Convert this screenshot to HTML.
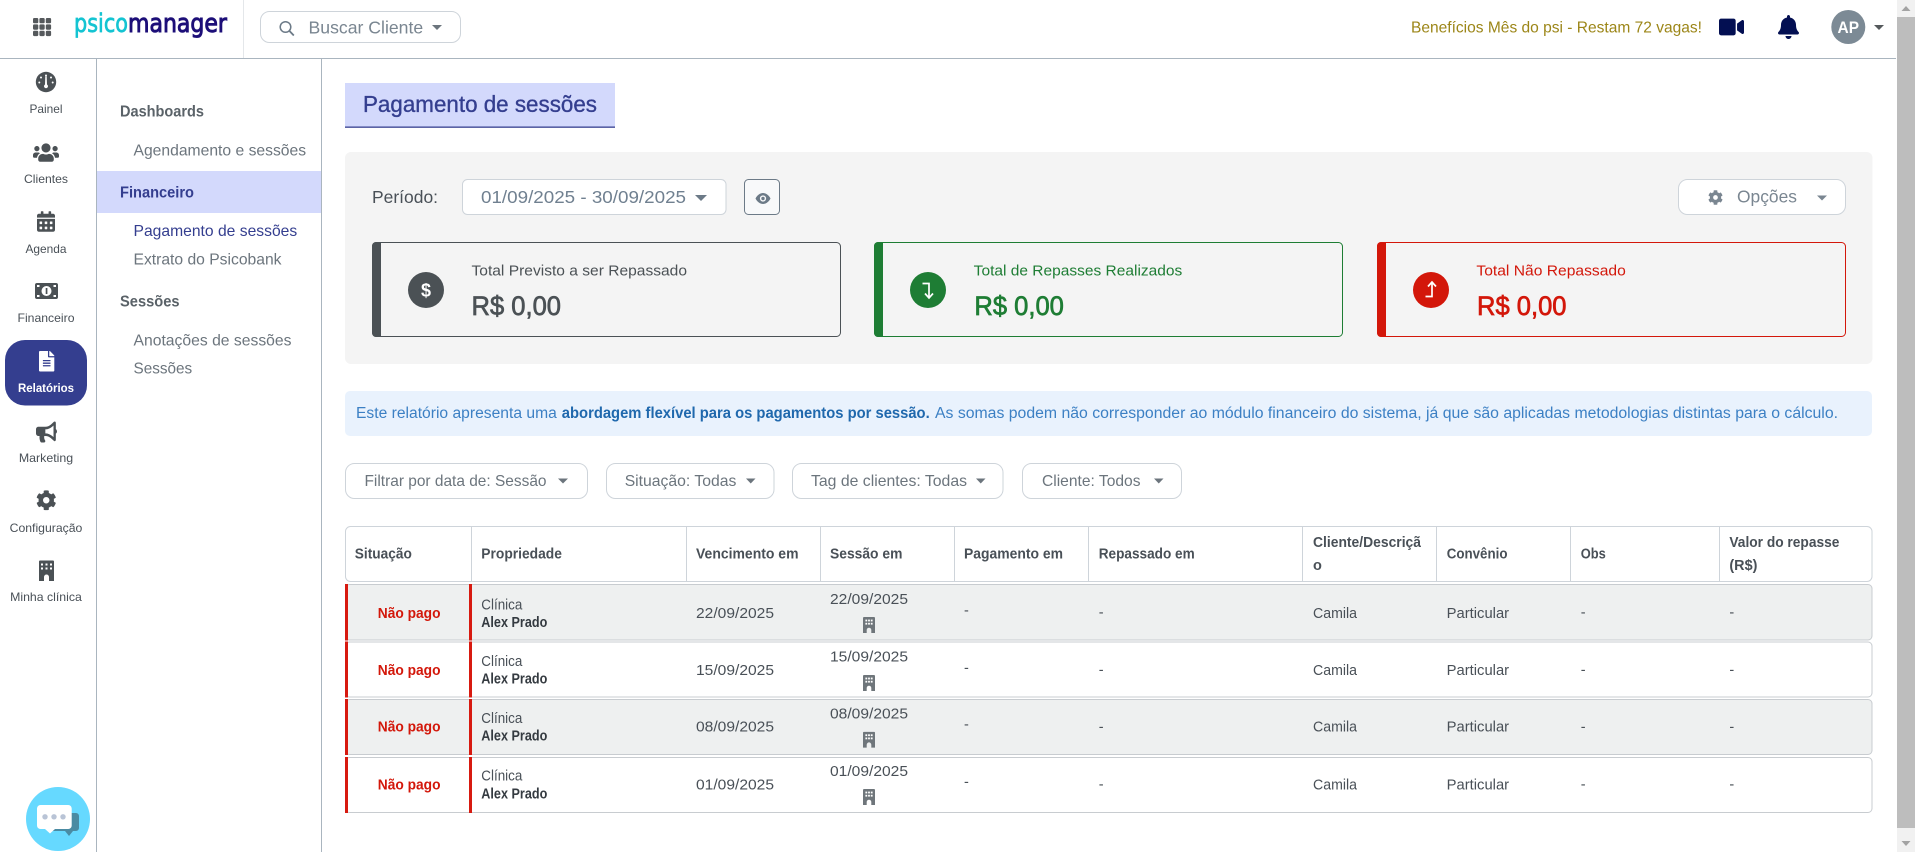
<!DOCTYPE html>
<html lang="pt-BR"><head><meta charset="utf-8"><title>Pagamento de sessões</title>
<style>
html,body{margin:0;padding:0;background:#fff;width:1915px;height:852px;overflow:hidden}
svg{display:block}
text{font-family:"Liberation Sans",Arial,sans-serif;white-space:pre}
.b{font-weight:700}
.lab{font-size:12px;fill:#495057;text-anchor:middle}
.pl{font-size:16px;fill:#6c757d}
.ph{font-size:15.5px;font-weight:700;fill:#5a6268}
.box{fill:#fff;stroke:#ced4da}
.flt{font-size:16px;fill:#6c757d}
.th{font-size:14.5px;font-weight:700;fill:#495057}
.td{font-size:14.5px;fill:#495057}
.ic{fill:#4b5155}
.car{fill:#6c757d}
.np{font-size:14.5px;font-weight:700;fill:#d3170a}
.amt{font-size:26.5px;stroke-width:.7px}
.ct{font-size:15px}
</style></head><body>
<svg xmlns="http://www.w3.org/2000/svg" width="1915" height="852" viewBox="0 0 1915 852">
<defs>
<symbol id="bld" viewBox="0 0 12 16"><path fill="#6f767b" d="M1 0h10a1 1 0 0 1 1 1v15H8.300v-3a2.300 2.300 0 0 0-4.600 0V16H0V1a1 1 0 0 1 1-1z"/><g fill="#fff"><rect x="2.400" y="2.600" width="1.800" height="1.800"/><rect x="5.100" y="2.600" width="1.800" height="1.800"/><rect x="7.800" y="2.600" width="1.800" height="1.800"/><rect x="2.400" y="5.800" width="1.800" height="1.800"/><rect x="5.100" y="5.800" width="1.800" height="1.800"/><rect x="7.800" y="5.800" width="1.800" height="1.800"/></g></symbol>
<symbol id="cog" viewBox="0 0 512 512"><path d="M487.4 315.7l-42.6-24.6c4.3-23.2 4.3-47 0-70.2l42.6-24.6c4.9-2.8 7.1-8.6 5.5-14-11.1-35.6-30-67.8-54.7-94.6-3.8-4.1-10-5.1-14.8-2.3L380.8 110c-17.9-15.4-38.5-27.3-60.8-35.1V25.800c0-5.600-3.900-10.500-9.400-11.700-36.700-8.200-74.300-7.800-109.200 0-5.500 1.200-9.400 6.100-9.400 11.700V75c-22.200 7.900-42.800 19.800-60.800 35.100L88.700 85.500c-4.900-2.800-11-1.900-14.800 2.300-24.700 26.700-43.600 58.900-54.700 94.600-1.700 5.400.6 11.200 5.500 14L67.300 221c-4.300 23.200-4.300 47 0 70.200l-42.600 24.600c-4.900 2.800-7.100 8.600-5.500 14 11.100 35.600 30 67.800 54.700 94.600 3.800 4.100 10 5.100 14.800 2.300l42.600-24.600c17.900 15.400 38.500 27.300 60.800 35.100v49.200c0 5.600 3.900 10.500 9.400 11.700 36.700 8.200 74.300 7.800 109.200 0 5.500-1.200 9.400-6.100 9.400-11.700v-49.200c22.200-7.900 42.800-19.800 60.800-35.100l42.600 24.600c4.900 2.800 11 1.900 14.800-2.300 24.700-26.700 43.600-58.900 54.700-94.600 1.500-5.500-.7-11.300-5.600-14.100zM256 336c-44.100 0-80-35.900-80-80s35.900-80 80-80 80 35.900 80 80-35.900 80-80 80z"/></symbol>
</defs>

<!-- header -->
<g>
<rect x="0" y="58" width="1896" height="1" fill="#aab5bf"/>
<rect x="243" y="0" width="1" height="58" fill="#e4e7ea"/>
<g fill="#55595c">
<rect x="33" y="18" width="5.300" height="5.300" rx="1.200"/><rect x="39.400" y="18" width="5.300" height="5.300" rx="1.200"/><rect x="45.800" y="18" width="5.300" height="5.300" rx="1.200"/>
<rect x="33" y="24.400" width="5.300" height="5.300" rx="1.200"/><rect x="39.400" y="24.400" width="5.300" height="5.300" rx="1.200"/><rect x="45.800" y="24.400" width="5.300" height="5.300" rx="1.200"/>
<rect x="33" y="30.800" width="5.300" height="5.300" rx="1.200"/><rect x="39.400" y="30.800" width="5.300" height="5.300" rx="1.200"/><rect x="45.800" y="30.800" width="5.300" height="5.300" rx="1.200"/>
</g>
<text x="74" y="32" textLength="54" lengthAdjust="spacingAndGlyphs" style="font-family:'DejaVu Sans',sans-serif;font-size:26px;fill:#14c4d2;stroke:#14c4d2;stroke-width:.7px">psico</text>
<text x="128" y="32" textLength="99" lengthAdjust="spacingAndGlyphs" style="font-family:'DejaVu Sans',sans-serif;font-size:26px;fill:#1d0f78;stroke:#1d0f78;stroke-width:1px">manager</text>
<rect class="box" x="260.500" y="11.500" width="200" height="31" rx="9"/>
<circle cx="285.500" cy="27" r="5.300" fill="none" stroke="#6c7a87" stroke-width="1.500"/><path d="M289.500 31l4.300 4.500" stroke="#6c7a87" stroke-width="1.800" fill="none"/>
<text x="308.500" y="33.500" textLength="114.700" lengthAdjust="spacingAndGlyphs" style="font-size:17.500px;fill:#7a8691">Buscar Cliente</text>
<path class="car" d="M432 25h10l-5 5z"/>
<text x="1411" y="32.500" textLength="291" lengthAdjust="spacingAndGlyphs" style="font-size:16px;fill:#9c8618">Benefícios Mês do psi - Restam 72 vagas!</text>
<svg x="1719" y="15" width="25" height="24" viewBox="0 0 576 512" preserveAspectRatio="xMidYMid meet"><path fill="#030f52" d="M336.200 64H47.800C21.400 64 0 85.400 0 111.800v288.400C0 426.600 21.400 448 47.800 448h288.400c26.400 0 47.800-21.400 47.800-47.800V111.800c0-26.400-21.400-47.800-47.800-47.800zm189.400 37.700L416 177.300v157.400l109.600 75.500c21.200 14.600 50.400-.3 50.400-25.800V127.500c0-25.400-29.100-40.400-50.400-25.800z"/></svg>
<svg x="1778" y="15" width="21" height="24" viewBox="0 0 448 512"><path fill="#030f52" d="M224 512c35.320 0 63.970-28.650 63.970-64H160.030c0 35.350 28.650 64 63.970 64zm215.390-149.710c-19.320-20.760-55.470-51.990-55.470-154.290 0-77.700-54.480-139.900-127.940-155.160V32c0-17.670-14.320-32-31.980-32s-31.980 14.330-31.980 32v20.840C118.560 68.100 64.080 130.300 64.080 208c0 102.300-36.150 133.530-55.470 154.290-6 6.450-8.660 14.160-8.610 21.710.11 16.400 12.980 32 32.100 32h383.800c19.120 0 32-15.600 32.100-32 .05-7.550-2.610-15.270-8.610-21.710z"/></svg>
<circle cx="1848.300" cy="27" r="17" fill="#7c8a95"/>
<text x="1848.300" y="33" text-anchor="middle" class="b" textLength="21.500" lengthAdjust="spacingAndGlyphs" style="font-size:17px;fill:#fff">AP</text>
<path d="M1874 25h10l-5 5z" fill="#55595c"/>
</g>

<!-- scrollbar -->
<g>
<rect x="1897" y="0" width="18" height="852" fill="#f1f1f1"/>
<rect x="1897" y="17" width="18" height="811" fill="#bdbdbd"/>
<path d="M1906 6l4.500 5h-9z" fill="#a3a3a3"/>
<path d="M1906 846l4.500-5h-9z" fill="#a3a3a3"/>
</g>

<!-- rail -->
<g>
<rect x="96" y="59" width="1" height="793" fill="#aab5bf"/>
<rect x="321" y="59" width="1" height="793" fill="#aab5bf"/>

<circle class="ic" cx="46" cy="82" r="10.200"/>
<g fill="#fff"><circle cx="46" cy="75.500" r="1"/><circle cx="41" cy="77.500" r="1"/><circle cx="51" cy="77.500" r="1"/><circle cx="39.300" cy="82.500" r="1"/><circle cx="52.700" cy="82.500" r="1"/><path d="M45.300 76.500h1.400l.3 8a2 2 0 1 1-2 0z"/></g>
<text class="lab" x="46" y="113" textLength="33" lengthAdjust="spacingAndGlyphs">Painel</text>

<svg x="33" y="142" width="26" height="21" viewBox="0 0 640 512" preserveAspectRatio="none"><path class="ic" d="M96 224c35.300 0 64-28.700 64-64s-28.700-64-64-64-64 28.700-64 64 28.700 64 64 64zm448 0c35.300 0 64-28.700 64-64s-28.700-64-64-64-64 28.700-64 64 28.700 64 64 64zm32 32h-64c-17.600 0-33.500 7.100-45.100 18.600 40.300 22.100 68.900 62 75.100 109.400h66c17.700 0 32-14.300 32-32v-32c0-35.300-28.700-64-64-64zm-256 0c61.900 0 112-50.100 112-112S381.900 32 320 32 208 82.100 208 144s50.100 112 112 112zm76.800 32h-8.300c-20.800 10-43.900 16-68.500 16s-47.600-6-68.500-16h-8.300C179.600 288 128 339.600 128 403.200V432c0 26.500 21.500 48 48 48h288c26.500 0 48-21.500 48-48v-28.800c0-63.600-51.600-115.200-115.200-115.200zm-223.700-13.400C161.500 263.100 145.600 256 128 256H64c-35.300 0-64 28.700-64 64v32c0 17.700 14.300 32 32 32h65.900c6.300-47.400 34.900-87.300 75.200-109.400z"/></svg>
<text class="lab" x="46" y="183" textLength="44" lengthAdjust="spacingAndGlyphs">Clientes</text>

<svg x="37" y="211" width="18" height="21" viewBox="0 0 448 512"><path class="ic" d="M0 464c0 26.500 21.500 48 48 48h352c26.500 0 48-21.500 48-48V192H0v272zm320-196c0-6.600 5.400-12 12-12h40c6.600 0 12 5.400 12 12v40c0 6.600-5.400 12-12 12h-40c-6.600 0-12-5.400-12-12v-40zm0 128c0-6.600 5.400-12 12-12h40c6.600 0 12 5.400 12 12v40c0 6.600-5.400 12-12 12h-40c-6.600 0-12-5.400-12-12v-40zM192 268c0-6.600 5.400-12 12-12h40c6.600 0 12 5.400 12 12v40c0 6.600-5.400 12-12 12h-40c-6.600 0-12-5.400-12-12v-40zm0 128c0-6.600 5.400-12 12-12h40c6.600 0 12 5.400 12 12v40c0 6.600-5.400 12-12 12h-40c-6.600 0-12-5.400-12-12v-40zM64 268c0-6.600 5.400-12 12-12h40c6.600 0 12 5.400 12 12v40c0 6.600-5.400 12-12 12H76c-6.600 0-12-5.400-12-12v-40zm0 128c0-6.600 5.400-12 12-12h40c6.600 0 12 5.400 12 12v40c0 6.600-5.400 12-12 12H76c-6.600 0-12-5.400-12-12v-40zM400 64h-48V16c0-8.800-7.200-16-16-16h-32c-8.800 0-16 7.200-16 16v48H160V16c0-8.800-7.200-16-16-16h-32c-8.800 0-16 7.200-16 16v48H48C21.500 64 0 85.500 0 112v48h448v-48c0-26.500-21.500-48-48-48z"/></svg>
<text class="lab" x="46" y="253" textLength="41" lengthAdjust="spacingAndGlyphs">Agenda</text>

<rect class="ic" x="35" y="283" width="23" height="16" rx="2"/>
<circle cx="46.500" cy="291" r="5" fill="#fff"/><rect class="ic" x="45.700" y="288" width="1.700" height="6"/>
<g fill="#fff"><rect x="37" y="285" width="2.500" height="2"/><rect x="53.500" y="285" width="2.500" height="2"/><rect x="37" y="295" width="2.500" height="2"/><rect x="53.500" y="295" width="2.500" height="2"/></g>
<text class="lab" x="46" y="322" textLength="57" lengthAdjust="spacingAndGlyphs">Financeiro</text>

<rect x="5" y="340" width="82" height="65.500" rx="20" fill="#343e8f"/>
<svg x="39" y="351" width="15.400" height="20.500" viewBox="0 0 384 512"><path fill="#fff" d="M224 136V0H24C10.700 0 0 10.700 0 24v464c0 13.300 10.700 24 24 24h336c13.300 0 24-10.700 24-24V160H248c-13.200 0-24-10.800-24-24zm64 236c0 6.600-5.400 12-12 12H108c-6.600 0-12-5.400-12-12v-8c0-6.600 5.400-12 12-12h168c6.600 0 12 5.400 12 12v8zm0-64c0 6.600-5.400 12-12 12H108c-6.600 0-12-5.400-12-12v-8c0-6.600 5.400-12 12-12h168c6.600 0 12 5.400 12 12v8zm0-72v8c0 6.600-5.400 12-12 12H108c-6.600 0-12-5.400-12-12v-8c0-6.600 5.400-12 12-12h168c6.600 0 12 5.400 12 12zm96-114.100v6.100H256V0h6.100c6.400 0 12.500 2.500 17 7l97.900 98c4.500 4.500 7 10.600 7 16.900z"/></svg>
<text class="lab b" x="46" y="392" textLength="56" lengthAdjust="spacingAndGlyphs" style="fill:#fff">Relatórios</text>

<svg x="36" y="421.500" width="21" height="21" viewBox="0 0 576 512" preserveAspectRatio="none"><path class="ic" d="M576 240c0-23.630-12.950-44.040-32-55.120V32.010C544 23.260 537.020 0 512 0c-7.120 0-14.190 2.380-19.980 7.020l-85.030 68.030C364.280 109.190 310.660 128 256 128H64c-35.350 0-64 28.650-64 64v96c0 35.350 28.650 64 64 64h33.700c-1.390 10.480-2.180 21.140-2.180 32 0 39.770 9.260 77.350 25.560 110.940 5.190 10.690 16.520 17.060 28.400 17.060h74.280c26.050 0 41.690-29.840 25.900-50.560-16.400-21.520-26.150-48.360-26.150-77.440 0-11.110 1.620-21.790 4.410-32H256c54.660 0 108.280 18.810 150.980 52.950l85.030 68.030a32.023 32.023 0 0 0 19.980 7.020c24.920 0 32-22.780 32-32V295.130C563.050 284.040 576 263.630 576 240zm-96 141.420l-33.050-26.440C392.950 311.780 325.120 288 256 288v-96c69.120 0 136.950-23.780 190.950-66.980L480 98.580v282.840z"/></svg>
<text class="lab" x="46" y="461.800" textLength="54.300" lengthAdjust="spacingAndGlyphs">Marketing</text>

<use href="#cog" x="36" y="490" width="20.500" height="20.500" class="ic"/>
<text class="lab" x="46" y="532" textLength="72.700" lengthAdjust="spacingAndGlyphs">Configuração</text>

<path class="ic" d="M40 560.500h13a1 1 0 0 1 1 1v19.500h-5v-4a2.500 2.500 0 0 0-5 0v4h-5v-19.500a1 1 0 0 1 1-1z"/>
<g fill="#fff"><rect x="41" y="563.500" width="2" height="2"/><rect x="45.500" y="563.500" width="2" height="2"/><rect x="50" y="563.500" width="2" height="2"/><rect x="41" y="567.500" width="2" height="2"/><rect x="45.500" y="567.500" width="2" height="2"/><rect x="50" y="567.500" width="2" height="2"/></g>
<text class="lab" x="46" y="601" textLength="71.700" lengthAdjust="spacingAndGlyphs">Minha clínica</text>

<circle cx="58" cy="819" r="32" fill="#66d9ff"/>
<path d="M52 813h24a3 3 0 0 1 3 3v12a3 3 0 0 1-3 3h-3l-4 5-4-5H52z" fill="#4a8ba3"/>
<path d="M40.500 805h27.700a3.500 3.500 0 0 1 3.500 3.500v17a3.500 3.500 0 0 1-3.500 3.500H55l-5 4.500-5-4.500h-4.500a3.500 3.500 0 0 1-3.500-3.500v-17a3.500 3.500 0 0 1 3.500-3.500z" fill="#fff"/>
<g fill="#b9c4d6"><circle cx="45" cy="816.800" r="2.700"/><circle cx="54" cy="816.800" r="2.700"/><circle cx="63" cy="816.800" r="2.700"/></g>
</g>

<!-- panel -->
<g>
<text class="ph" x="120" y="116.500" textLength="84" lengthAdjust="spacingAndGlyphs">Dashboards</text>
<text class="pl" x="133.500" y="155.500" textLength="172.600" lengthAdjust="spacingAndGlyphs">Agendamento e sessões</text>
<rect x="97" y="171" width="224" height="42" fill="#d3d9fc"/>
<text class="ph" x="120" y="197.500" textLength="74" lengthAdjust="spacingAndGlyphs" style="fill:#343e8f">Financeiro</text>
<text class="pl" x="133.500" y="236" textLength="163.700" lengthAdjust="spacingAndGlyphs" style="fill:#343e8f">Pagamento de sessões</text>
<text class="pl" x="133.500" y="264.500" textLength="148" lengthAdjust="spacingAndGlyphs">Extrato do Psicobank</text>
<text class="ph" x="120" y="306.500" textLength="59.600" lengthAdjust="spacingAndGlyphs">Sessões</text>
<text class="pl" x="133.500" y="345.500" textLength="158" lengthAdjust="spacingAndGlyphs">Anotações de sessões</text>
<text class="pl" x="133.500" y="373.500" textLength="58.700" lengthAdjust="spacingAndGlyphs">Sessões</text>
</g>

<!-- title -->
<g>
<rect x="345" y="83" width="270" height="44" fill="#d3d9fc"/>
<rect x="345" y="126.500" width="270" height="1.300" fill="#343e8f"/>
<text x="363" y="112" textLength="234" lengthAdjust="spacingAndGlyphs" style="font-size:23.500px;fill:#343e8f;stroke:#343e8f;stroke-width:.35px">Pagamento de sessões</text>
</g>

<!-- summary -->
<g>
<rect x="345" y="152" width="1527.500" height="212" rx="6" fill="#f4f4f4"/>
<text x="372" y="203" textLength="66" lengthAdjust="spacingAndGlyphs" style="font-size:17.500px;fill:#495057">Período:</text>
<rect class="box" x="462.500" y="179.500" width="263.500" height="35" rx="5"/>
<text x="481" y="203" textLength="205" lengthAdjust="spacingAndGlyphs" style="font-size:17.500px;fill:#708090">01/09/2025 - 30/09/2025</text>
<path class="car" d="M695 195h12l-6 6z" style="fill:#6c7a87"/>
<rect x="744.500" y="179.500" width="35" height="35" rx="4" fill="#f8f9fa" stroke="#6c7a87"/>
<path d="M755.500 198.500c2-3.800 4.800-5.500 7.500-5.500s5.500 1.700 7.500 5.500c-2 3.800-4.800 5.500-7.500 5.500s-5.500-1.700-7.500-5.500z" fill="#6c7a87"/><circle cx="763" cy="198.500" r="3.100" fill="#f8f9fa"/><circle cx="763" cy="198.500" r="1.700" fill="#6c7a87"/>
<rect class="box" x="1678.500" y="179.500" width="167" height="35" rx="9"/>
<use href="#cog" x="1708" y="190" width="15" height="15" style="fill:#7a8691"/>
<text x="1737" y="202.700" textLength="60" lengthAdjust="spacingAndGlyphs" style="font-size:17.500px;fill:#7a8691">Opções</text>
<path d="M1817 195.500h10l-5 5z" fill="#7a8691"/>

<!-- card 1 -->
<rect x="372.500" y="242.500" width="468" height="94" rx="4" fill="#f4f4f4" stroke="#4b5155"/>
<path d="M376 242h5v95h-5a4 4 0 0 1-4-4v-87a4 4 0 0 1 4-4z" fill="#4b5155"/>
<circle cx="426" cy="290" r="18" fill="#4b5155"/>
<text x="426" y="296.500" text-anchor="middle" style="font-size:18px;font-weight:700;fill:#fff">$</text>
<text class="ct" x="471.500" y="275.500" textLength="215.500" lengthAdjust="spacingAndGlyphs" style="fill:#4b5155">Total Previsto a ser Repassado</text>
<text class="amt" x="471.500" y="315" textLength="89.500" lengthAdjust="spacingAndGlyphs" style="fill:#4b5155;stroke:#4b5155">R$ 0,00</text>

<!-- card 2 -->
<rect x="874.500" y="242.500" width="468" height="94" rx="4" fill="#f4f4f4" stroke="#1e7d34"/>
<path d="M878 242h5v95h-5a4 4 0 0 1-4-4v-87a4 4 0 0 1 4-4z" fill="#1e7d34"/>
<circle cx="928" cy="290" r="18" fill="#1e7d34"/>
<path d="M922.500 283.500h6.500v13.500M925 293.500l4 4.500 4-4.500" fill="none" stroke="#fff" stroke-width="1.700"/>
<text class="ct" x="973.700" y="275.500" textLength="208.600" lengthAdjust="spacingAndGlyphs" style="fill:#1e7d34">Total de Repasses Realizados</text>
<text class="amt" x="974.400" y="315" textLength="89.500" lengthAdjust="spacingAndGlyphs" style="fill:#1e7d34;stroke:#1e7d34">R$ 0,00</text>

<!-- card 3 -->
<rect x="1377.500" y="242.500" width="468" height="94" rx="4" fill="#f4f4f4" stroke="#d3170a"/>
<path d="M1381 242h5v95h-5a4 4 0 0 1-4-4v-87a4 4 0 0 1 4-4z" fill="#d3170a"/>
<circle cx="1431" cy="290" r="18" fill="#d3170a"/>
<path d="M1425.500 296.500h6.500v-13.500M1428 286.500l4-4.500 4 4.500" fill="none" stroke="#fff" stroke-width="1.700"/>
<text class="ct" x="1476.400" y="275.500" textLength="149.400" lengthAdjust="spacingAndGlyphs" style="fill:#d3170a">Total Não Repassado</text>
<text class="amt" x="1477" y="315" textLength="89.500" lengthAdjust="spacingAndGlyphs" style="fill:#d3170a;stroke:#d3170a">R$ 0,00</text>
</g>

<!-- alert -->
<g style="font-size:15.500px;fill:#3c80c4">
<rect x="345" y="391" width="1527" height="45" rx="5" fill="#e9f2fd"/>
<text x="356" y="418" textLength="200.800" lengthAdjust="spacingAndGlyphs">Este relatório apresenta uma</text>
<text x="561.800" y="418" textLength="367.900" lengthAdjust="spacingAndGlyphs" class="b" style="fill:#1f68ad">abordagem flexível para os pagamentos por sessão.</text>
<text x="935" y="418" textLength="903" lengthAdjust="spacingAndGlyphs">As somas podem não corresponder ao módulo financeiro do sistema, já que são aplicadas metodologias distintas para o cálculo.</text>
</g>

<!-- filters -->
<g>
<rect class="box" x="345.500" y="463.500" width="242" height="35" rx="9"/>
<text class="flt" x="364.500" y="486" textLength="182" lengthAdjust="spacingAndGlyphs">Filtrar por data de: Sessão</text>
<path class="car" d="M558 478.500h10l-5 5z"/>
<rect class="box" x="606.500" y="463.500" width="167.500" height="35" rx="9"/>
<text class="flt" x="624.700" y="486" textLength="111.700" lengthAdjust="spacingAndGlyphs">Situação: Todas</text>
<path class="car" d="M746 478.500h9.500l-4.750 5z"/>
<rect class="box" x="792.500" y="463.500" width="210.500" height="35" rx="9"/>
<text class="flt" x="811" y="486" textLength="156" lengthAdjust="spacingAndGlyphs">Tag de clientes: Todas</text>
<path class="car" d="M976 478.500h9.500l-4.750 5z"/>
<rect class="box" x="1022.500" y="463.500" width="159" height="35" rx="9"/>
<text class="flt" x="1042" y="486" textLength="98.500" lengthAdjust="spacingAndGlyphs">Cliente: Todos</text>
<path class="car" d="M1154 478.500h9.500l-4.750 5z"/>
</g>

<!-- table header -->
<g>
<rect class="box" x="345.500" y="526.500" width="1526.500" height="55" rx="5"/>
<path d="M471.500 527v54M686.500 527v54M820.500 527v54M954.500 527v54M1088.500 527v54M1302.500 527v54M1436.500 527v54M1570.500 527v54M1719.500 527v54" stroke="#ced4da"/>
<text class="th" x="354.800" y="558.500" textLength="57" lengthAdjust="spacingAndGlyphs">Situação</text>
<text class="th" x="481.300" y="558.500" textLength="80.600" lengthAdjust="spacingAndGlyphs">Propriedade</text>
<text class="th" x="696" y="558.500" textLength="102.500" lengthAdjust="spacingAndGlyphs">Vencimento em</text>
<text class="th" x="830" y="558.500" textLength="72.400" lengthAdjust="spacingAndGlyphs">Sessão em</text>
<text class="th" x="964" y="558.500" textLength="99" lengthAdjust="spacingAndGlyphs">Pagamento em</text>
<text class="th" x="1098.700" y="558.500" textLength="96" lengthAdjust="spacingAndGlyphs">Repassado em</text>
<text class="th" x="1313" y="547" textLength="108" lengthAdjust="spacingAndGlyphs">Cliente/Descriçã</text>
<text class="th" x="1313" y="570">o</text>
<text class="th" x="1446.700" y="558.500" textLength="60.800" lengthAdjust="spacingAndGlyphs">Convênio</text>
<text class="th" x="1580.800" y="558.500" textLength="25" lengthAdjust="spacingAndGlyphs">Obs</text>
<text class="th" x="1729.400" y="547" textLength="110" lengthAdjust="spacingAndGlyphs">Valor do repasse</text>
<text class="th" x="1729.400" y="570" textLength="28" lengthAdjust="spacingAndGlyphs">(R$)</text>
</g>

<!-- rows -->
<g>
<rect x="345.500" y="584.500" width="1526.500" height="55.500" rx="4" fill="#eef0f0" stroke="#c8ccd0"/>
<rect x="345" y="584" width="3" height="56.500" fill="#d71a10"/><rect x="469" y="584" width="3" height="56.500" fill="#d71a10"/>
<text class="np" x="377.800" y="618" textLength="62.700" lengthAdjust="spacingAndGlyphs">Não pago</text>
<text class="td" x="481.300" y="609.300" textLength="41" lengthAdjust="spacingAndGlyphs">Clínica</text>
<text class="td b" x="481.300" y="627" textLength="66" lengthAdjust="spacingAndGlyphs" style="fill:#343a40">Alex Prado</text>
<text class="td" x="696" y="618" textLength="78" lengthAdjust="spacingAndGlyphs">22/09/2025</text>
<text class="td" x="830" y="604" textLength="78" lengthAdjust="spacingAndGlyphs">22/09/2025</text>
<use href="#bld" x="863" y="617" width="12" height="16"/>
<text class="td" x="964" y="615">-</text><text class="td" x="1098.700" y="617">-</text>
<text class="td" x="1313" y="618" textLength="44" lengthAdjust="spacingAndGlyphs">Camila</text>
<text class="td" x="1446.700" y="618" textLength="62.400" lengthAdjust="spacingAndGlyphs">Particular</text>
<text class="td" x="1580.800" y="617">-</text><text class="td" x="1729.400" y="617">-</text>
</g>
<g transform="translate(0 57.500)">
<rect x="345.500" y="584.500" width="1526.500" height="55" rx="4" fill="#fff" stroke="#c8ccd0"/>
<rect x="345" y="584" width="3" height="56" fill="#d71a10"/><rect x="469" y="584" width="3" height="56" fill="#d71a10"/>
<text class="np" x="377.800" y="617.500" textLength="62.700" lengthAdjust="spacingAndGlyphs">Não pago</text>
<text class="td" x="481.300" y="608.500" textLength="41" lengthAdjust="spacingAndGlyphs">Clínica</text>
<text class="td b" x="481.300" y="626" textLength="66" lengthAdjust="spacingAndGlyphs" style="fill:#343a40">Alex Prado</text>
<text class="td" x="696" y="617.500" textLength="78" lengthAdjust="spacingAndGlyphs">15/09/2025</text>
<text class="td" x="830" y="604" textLength="78" lengthAdjust="spacingAndGlyphs">15/09/2025</text>
<use href="#bld" x="863" y="617.500" width="12" height="16"/>
<text class="td" x="964" y="615">-</text><text class="td" x="1098.700" y="617">-</text>
<text class="td" x="1313" y="617.500" textLength="44" lengthAdjust="spacingAndGlyphs">Camila</text>
<text class="td" x="1446.700" y="617.500" textLength="62.400" lengthAdjust="spacingAndGlyphs">Particular</text>
<text class="td" x="1580.800" y="617">-</text><text class="td" x="1729.400" y="617">-</text>
</g>
<g transform="translate(0 115)">
<rect x="345.500" y="584.500" width="1526.500" height="55" rx="4" fill="#eef0f0" stroke="#c8ccd0"/>
<rect x="345" y="584" width="3" height="56" fill="#d71a10"/><rect x="469" y="584" width="3" height="56" fill="#d71a10"/>
<text class="np" x="377.800" y="616.700" textLength="62.700" lengthAdjust="spacingAndGlyphs">Não pago</text>
<text class="td" x="481.300" y="607.800" textLength="41" lengthAdjust="spacingAndGlyphs">Clínica</text>
<text class="td b" x="481.300" y="625.500" textLength="66" lengthAdjust="spacingAndGlyphs" style="fill:#343a40">Alex Prado</text>
<text class="td" x="696" y="616.700" textLength="78" lengthAdjust="spacingAndGlyphs">08/09/2025</text>
<text class="td" x="830" y="603.500" textLength="78" lengthAdjust="spacingAndGlyphs">08/09/2025</text>
<use href="#bld" x="863" y="616.700" width="12" height="16"/>
<text class="td" x="964" y="614">-</text><text class="td" x="1098.700" y="616.300">-</text>
<text class="td" x="1313" y="616.700" textLength="44" lengthAdjust="spacingAndGlyphs">Camila</text>
<text class="td" x="1446.700" y="616.700" textLength="62.400" lengthAdjust="spacingAndGlyphs">Particular</text>
<text class="td" x="1580.800" y="616.300">-</text><text class="td" x="1729.400" y="616.300">-</text>
</g>
<g transform="translate(0 173)">
<rect x="345.500" y="584.500" width="1526.500" height="55" rx="4" fill="#fff" stroke="#c8ccd0"/>
<rect x="345" y="584" width="3" height="56" fill="#d71a10"/><rect x="469" y="584" width="3" height="56" fill="#d71a10"/>
<text class="np" x="377.800" y="616.500" textLength="62.700" lengthAdjust="spacingAndGlyphs">Não pago</text>
<text class="td" x="481.300" y="607.500" textLength="41" lengthAdjust="spacingAndGlyphs">Clínica</text>
<text class="td b" x="481.300" y="625.300" textLength="66" lengthAdjust="spacingAndGlyphs" style="fill:#343a40">Alex Prado</text>
<text class="td" x="696" y="616.500" textLength="78" lengthAdjust="spacingAndGlyphs">01/09/2025</text>
<text class="td" x="830" y="603" textLength="78" lengthAdjust="spacingAndGlyphs">01/09/2025</text>
<use href="#bld" x="863" y="616" width="12" height="16"/>
<text class="td" x="964" y="613.500">-</text><text class="td" x="1098.700" y="616">-</text>
<text class="td" x="1313" y="616.500" textLength="44" lengthAdjust="spacingAndGlyphs">Camila</text>
<text class="td" x="1446.700" y="616.500" textLength="62.400" lengthAdjust="spacingAndGlyphs">Particular</text>
<text class="td" x="1580.800" y="616">-</text><text class="td" x="1729.400" y="616">-</text>
</g>
</svg>
</body></html>
